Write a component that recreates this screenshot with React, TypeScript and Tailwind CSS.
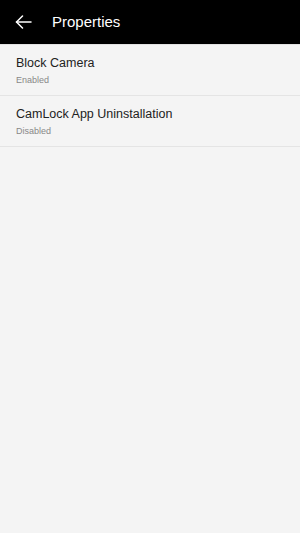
import React from 'react';

const items = [
  { title: 'Block Camera', status: 'Enabled' },
  { title: 'CamLock App Uninstallation', status: 'Disabled' },
];

export default function App() {
  return (
    <div className="w-[300px] h-[533px] bg-[#f4f4f4] flex flex-col" style={{ fontFamily: '"Liberation Sans", Arial, sans-serif' }}>
      <div className="h-[44px] bg-black flex items-center shrink-0">
        <button className="w-[44px] h-[44px] flex items-center justify-center pl-[2px] text-white">
          <svg width="17" height="14" viewBox="0 0 17 14" fill="none" stroke="currentColor" strokeWidth="1.5" strokeLinecap="round" strokeLinejoin="round">
            <path d="M16 7H1.5" />
            <path d="M7.5 1L1.5 7L7.5 13" />
          </svg>
        </button>
        <h1 className="ml-[8px] text-white text-[15px]">Properties</h1>
      </div>
      <div className="h-[1px] bg-[#e2e2e2]" />
      {items.map(item => (
        <div key={item.title} className="h-[51px] border-b border-[#e4e4e4] px-4 flex flex-col justify-center">
          <div className="text-[12.5px] text-[#222] leading-[16px]">{item.title}</div>
          <div className="text-[9px] text-[#888] leading-[12px] mt-[3px]">{item.status}</div>
        </div>
      ))}
    </div>
  );
}
